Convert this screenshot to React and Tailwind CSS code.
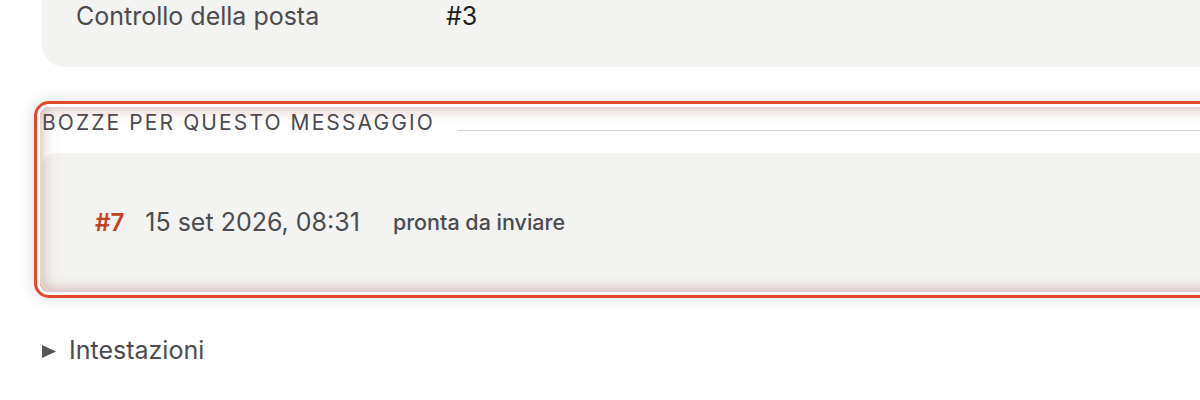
import React from 'react';

const font = { fontFamily: 'Inter, "Noto Sans", sans-serif' };

const DraftRow = ({ id, date, status }) => (
    <div className="flex items-center">
        <span className="text-[24px] font-semibold text-[#c8411f]">{id}</span>
        <span className="ml-[21px] text-[25px] text-[#4b4b50]">{date}</span>
        <span className="ml-[33px] text-[21.5px] font-medium text-[#4b4b50]">{status}</span>
    </div>
);

export default function App() {
    return (
        <div className="w-[1200px] h-[400px] overflow-hidden bg-white" style={font}>
            <div className="w-[1400px] pl-[42px]">
                {/* mail info card, top cut off */}
                <div className="bg-[#f3f3f1] rounded-bl-[22px] pl-[34px] pt-[1px] pb-[34px]">
                    <div className="flex items-center h-[32px]">
                        <span className="w-[370px] text-[25px] text-[#4b4b50]">Controllo della posta</span>
                        <span className="text-[25px] text-[#1d1d1f]">#3</span>
                    </div>
                </div>

                {/* highlighted drafts section */}
                <section className="relative mt-[40px] -ml-[2px] pl-[2px] rounded-[9px] shadow-[0_0_0_3px_#ffffff,0_0_0_6px_#e04a2b,0_0_16px_7px_rgba(0,0,0,0.13)] after:content-[''] after:absolute after:inset-0 after:rounded-[9px] after:pointer-events-none after:shadow-[inset_0_0_16px_rgba(150,80,70,0.5)]">
                    <div className="flex items-end h-[32px]">
                        <h2 className="text-[21px] leading-[32px] tracking-[0.1em] text-[#4b4b52] uppercase">
                            Bozze per questo messaggio
                        </h2>
                        <div className="flex-1 ml-[22px] mb-[8px] h-[1.5px] bg-[#d6d6d6]" />
                    </div>
                    <div className="mt-[14px] h-[139px] bg-[#f3f3f1] rounded-l-[14px] pl-[53px] flex items-center">
                        <DraftRow id="#7" date="15 set 2026, 08:31" status="pronta da inviare" />
                    </div>
                </section>

                {/* headers disclosure */}
                <div className="mt-[43px] flex items-center h-[32px]">
                    <svg width="14" height="13" viewBox="0 0 14 13" className="mr-[13px]">
                        <path d="M0 0 L14 6.5 L0 13 Z" fill="#555558" />
                    </svg>
                    <span className="text-[25px] text-[#4b4b50]">Intestazioni</span>
                </div>
            </div>
        </div>
    );
}
